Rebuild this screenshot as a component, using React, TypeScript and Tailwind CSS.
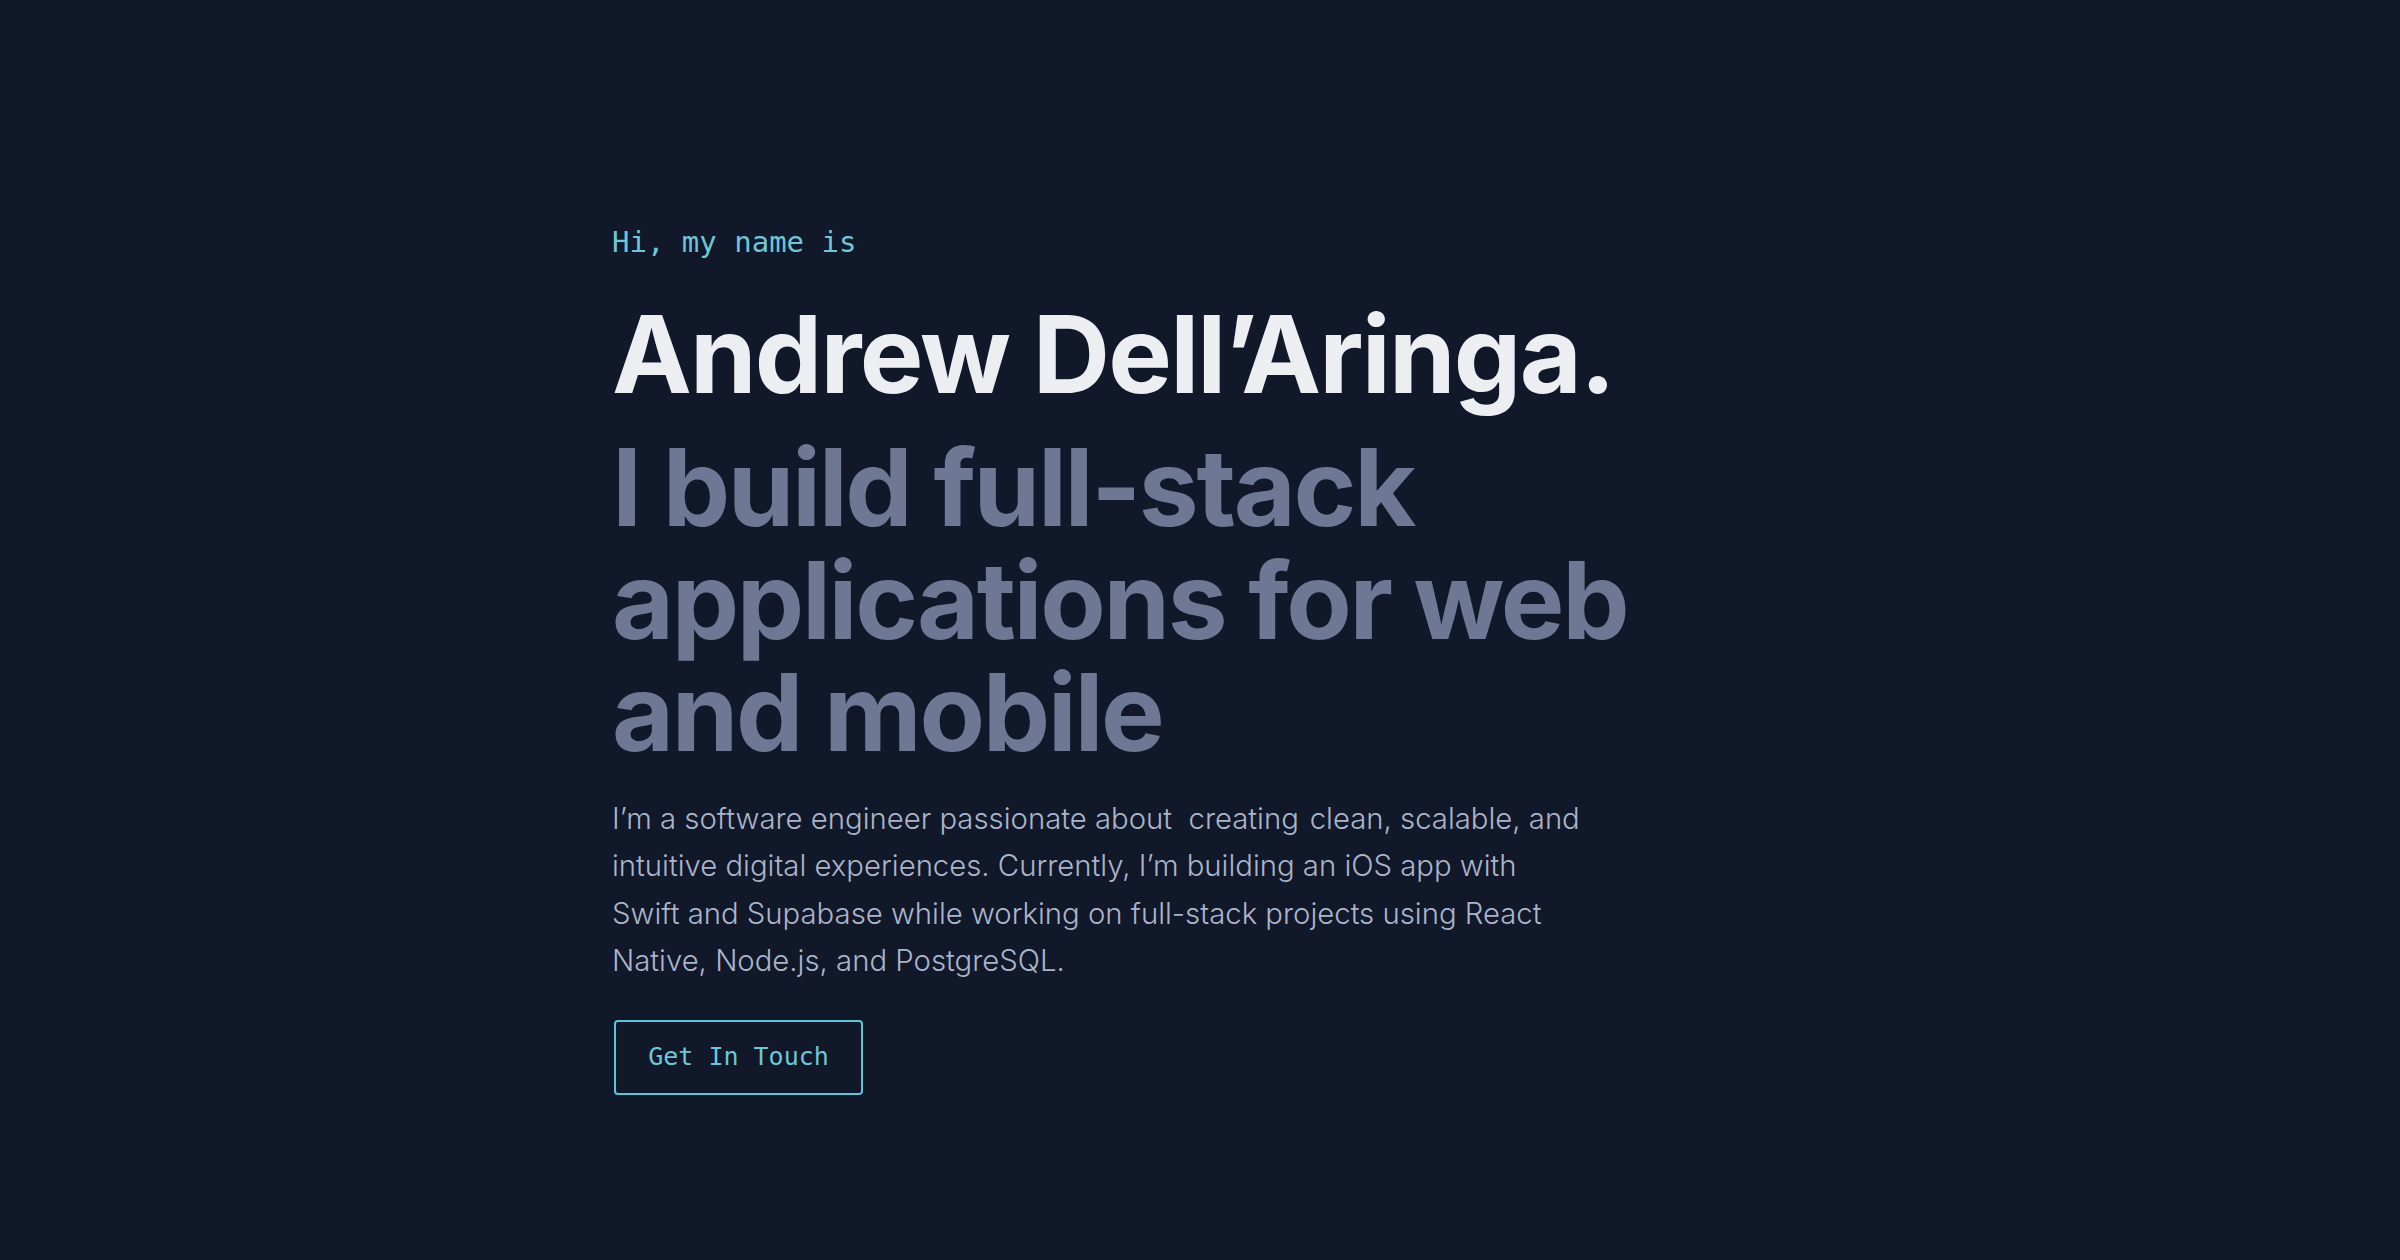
import React from "react";

const mono = { fontFamily: "'DejaVu Sans Mono', 'Liberation Mono', monospace" };

export default function App() {
  return (
    <div className="min-h-[1260px] w-full bg-[#101829]">
      <div className="mx-auto flex max-w-[1176px] flex-col items-start pt-[225px] font-['Inter','Noto_Sans',sans-serif]">
        <p className="text-[29px] leading-[1.2] text-[#6ec6d6]" style={mono}>
          Hi, my name is
        </p>
        <h1 className="mt-[36px] text-[107px] font-bold leading-[1.1] tracking-[-0.017em] text-[#eceef2]">
          Andrew Dell’Aringa.
        </h1>
        <h2 className="mt-[18px] max-w-[1020px] text-[107px] font-bold leading-[1.05] tracking-[-0.022em] text-[#6e7793]">
          I build full-stack applications for web and mobile
        </h2>
        <p className="mt-[26px] max-w-[980px] text-[29.3px] font-light leading-[47.5px] text-[#abb4ca]">
          I’m a software engineer passionate about {"\u00a0"}creating{"\u200a"} clean, scalable, and intuitive digital experiences. Currently, I’m building an iOS app with Swift and Supabase while working on full-stack projects using React Native, Node.js, and PostgreSQL.
        </p>
        <button className="ml-[2px] mt-[35px] h-[75px] w-[249px] rounded-[4px] border-2 border-[#5fc4d6] text-[25px] text-[#6ec6d6]" style={mono}>
          Get In Touch
        </button>
      </div>
    </div>
  );
}
